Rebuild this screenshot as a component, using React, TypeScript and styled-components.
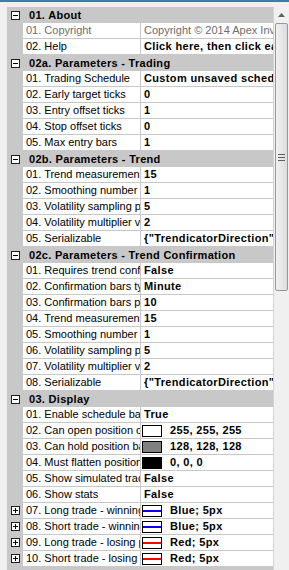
import React from "react";
import styled, { createGlobalStyle } from "styled-components";

const GRID_LINE = "#c8c8c8";

const GlobalStyle = createGlobalStyle`
  html, body {
    margin: 0;
    padding: 0;
    background: #f0f0f0;
  }
  body {
    font-family: "Liberation Sans", Arial, sans-serif;
    font-size: 11px;
  }
`;

const Frame = styled.div`
  width: 289px;
  height: 570px;
  overflow: hidden;
  display: flex;
  flex-direction: column;
  background: #f0f0f0;
`;

const TopEdge = styled.div`
  height: 7px;
  flex: none;
  border-top: 1px solid #3c7fb1;
  box-sizing: border-box;
  background: linear-gradient(#6b6b6b 0 1px, #f0f0f0 1px);
`;

const Body = styled.div`
  flex: 1;
  display: flex;
  min-height: 0;
  padding-left: 7px;
`;

const Grid = styled.div`
  flex: 1;
  min-width: 0;
  display: flex;
  flex-direction: column;
  background: ${GRID_LINE};
  overflow: hidden;
`;

const Row = styled.div`
  height: 16px;
  flex: none;
  display: flex;
  box-sizing: border-box;
  border-bottom: 1px solid ${GRID_LINE};
  white-space: nowrap;
`;

const CategoryRow = styled(Row)`
  background: ${GRID_LINE};
  border-bottom: none;
  align-items: center;
`;

const Margin = styled.div`
  width: 16px;
  flex: none;
  display: flex;
  align-items: center;
  justify-content: center;
  background: ${GRID_LINE};
`;

const ToggleBox = styled.div<{ $open?: boolean }>`
  width: 9px;
  height: 9px;
  box-sizing: border-box;
  border: 1px solid #1e1e1e;
  background: #fff;
  position: relative;
  &::before {
    content: "";
    position: absolute;
    left: 1px;
    right: 1px;
    top: 3px;
    height: 1px;
    background: #000;
  }
  &::after {
    content: "";
    position: absolute;
    top: 1px;
    bottom: 1px;
    left: 3px;
    width: 1px;
    background: ${(p) => (p.$open ? "transparent" : "#000")};
  }
`;

const CategoryTitle = styled.div`
  flex: 1;
  min-width: 0;
  padding-left: 6px;
  font-weight: bold;
  letter-spacing: 0.3px;
  color: #000;
  overflow: hidden;
  line-height: 15px;
`;

const NameCell = styled.div<{ $muted?: boolean }>`
  width: 118px;
  flex: none;
  background: #fff;
  border-right: 1px solid ${GRID_LINE};
  padding-left: 3px;
  box-sizing: border-box;
  overflow: hidden;
  line-height: 15px;
  color: ${(p) => (p.$muted ? "#6d6d6d" : "#000")};
`;

const ValueCell = styled.div<{ $muted?: boolean }>`
  flex: 1;
  min-width: 0;
  background: #fff;
  padding-left: 3px;
  display: flex;
  align-items: center;
  gap: 8px;
  overflow: hidden;
  line-height: 15px;
  font-weight: ${(p) => (p.$muted ? "normal" : "bold")};
  letter-spacing: ${(p) => (p.$muted ? "0" : "0.35px")};
  color: ${(p) => (p.$muted ? "#6d6d6d" : "#000")};
`;

const Swatch = styled.div<{ $fill: string; $pen?: string }>`
  width: 20px;
  height: 12px;
  flex: none;
  box-sizing: border-box;
  border: 1px solid #000;
  background: ${(p) => p.$fill};
  margin-left: -2px;
  display: flex;
  align-items: center;
  &::after {
    content: "";
    flex: 1;
    height: 2px;
    background: ${(p) => p.$pen ?? "transparent"};
  }
`;

const ScrollBar = styled.div`
  width: 16px;
  flex: none;
  display: flex;
  flex-direction: column;
  background: #f0f0f0;
  border-left: 1px solid #d4d4d4;
  box-sizing: border-box;
`;

const ArrowButton = styled.div`
  height: 16px;
  display: flex;
  align-items: center;
  justify-content: center;
`;

const Thumb = styled.div`
  height: 266px;
  margin: 0 1px;
  border: 1px solid #979797;
  border-radius: 2px;
  background: linear-gradient(90deg, #f1f1f1, #dcdcdc);
  display: flex;
  align-items: center;
  justify-content: center;
`;

const Track = styled.div`
  flex: 1;
`;

type Prop = {
  name: string;
  value: string;
  muted?: boolean;
  color?: string;
  pen?: string;
  expandable?: boolean;
};

type Category = { title: string; props: Prop[] };

const categories: Category[] = [
  {
    title: "01. About",
    props: [
      { name: "01. Copyright", value: "Copyright © 2014 Apex Investing", muted: true },
      { name: "02. Help", value: "Click here, then click each property for help" },
    ],
  },
  {
    title: "02a. Parameters - Trading",
    props: [
      { name: "01. Trading Schedule", value: "Custom unsaved schedule" },
      { name: "02. Early target ticks", value: "0" },
      { name: "03. Entry offset ticks", value: "1" },
      { name: "04. Stop offset ticks", value: "0" },
      { name: "05. Max entry bars", value: "1" },
    ],
  },
  {
    title: "02b. Parameters - Trend",
    props: [
      { name: "01. Trend measurement period", value: "15" },
      { name: "02. Smoothing number of bars", value: "1" },
      { name: "03. Volatility sampling period", value: "5" },
      { name: "04. Volatility multiplier value", value: "2" },
      { name: "05. Serializable", value: '{"TrendicatorDirection":1}' },
    ],
  },
  {
    title: "02c. Parameters - Trend Confirmation",
    props: [
      { name: "01. Requires trend confirmation", value: "False" },
      { name: "02. Confirmation bars type", value: "Minute" },
      { name: "03. Confirmation bars period", value: "10" },
      { name: "04. Trend measurement period", value: "15" },
      { name: "05. Smoothing number of bars", value: "1" },
      { name: "06. Volatility sampling period", value: "5" },
      { name: "07. Volatility multiplier value", value: "2" },
      { name: "08. Serializable", value: '{"TrendicatorDirection":1}' },
    ],
  },
  {
    title: "03. Display",
    props: [
      { name: "01. Enable schedule background", value: "True" },
      { name: "02. Can open position color", value: "255, 255, 255", color: "#ffffff" },
      { name: "03. Can hold position background", value: "128, 128, 128", color: "#808080" },
      { name: "04. Must flatten position color", value: "0, 0, 0", color: "#000000" },
      { name: "05. Show simulated trades", value: "False" },
      { name: "06. Show stats", value: "False" },
      { name: "07. Long trade - winning pen", value: "Blue; 5px", pen: "#0000ff", expandable: true },
      { name: "08. Short trade - winning pen", value: "Blue; 5px", pen: "#0000ff", expandable: true },
      { name: "09. Long trade - losing pen", value: "Red; 5px", pen: "#ff0000", expandable: true },
      { name: "10. Short trade - losing pen", value: "Red; 5px", pen: "#ff0000", expandable: true },
    ],
  },
];

const PropertyRow = ({ prop }: { prop: Prop }) => (
  <Row>
    <Margin>{prop.expandable && <ToggleBox />}</Margin>
    <NameCell $muted={prop.muted}>{prop.name}</NameCell>
    <ValueCell $muted={prop.muted}>
      {prop.color && <Swatch $fill={prop.color} />}
      {prop.pen && <Swatch $fill="#fff" $pen={prop.pen} />}
      {prop.value}
    </ValueCell>
  </Row>
);

const App = () => (
  <>
    <GlobalStyle />
    <Frame>
      <TopEdge />
      <Body>
        <Grid>
          {categories.map((cat) => (
            <React.Fragment key={cat.title}>
              <CategoryRow>
                <Margin>
                  <ToggleBox $open />
                </Margin>
                <CategoryTitle>{cat.title}</CategoryTitle>
              </CategoryRow>
              {cat.props.map((p) => (
                <PropertyRow key={cat.title + p.name} prop={p} />
              ))}
            </React.Fragment>
          ))}
        </Grid>
        <ScrollBar>
          <ArrowButton>
            <svg width="7" height="4" viewBox="0 0 7 4">
              <path d="M0 4 L3.5 0 L7 4 Z" fill="#606060" />
            </svg>
          </ArrowButton>
          <Thumb>
            <svg width="7" height="7" viewBox="0 0 7 7">
              <path d="M0 0.5H7M0 3.5H7M0 6.5H7" stroke="#606060" strokeWidth="1" />
            </svg>
          </Thumb>
          <Track />
        </ScrollBar>
      </Body>
    </Frame>
  </>
);

export default App;
